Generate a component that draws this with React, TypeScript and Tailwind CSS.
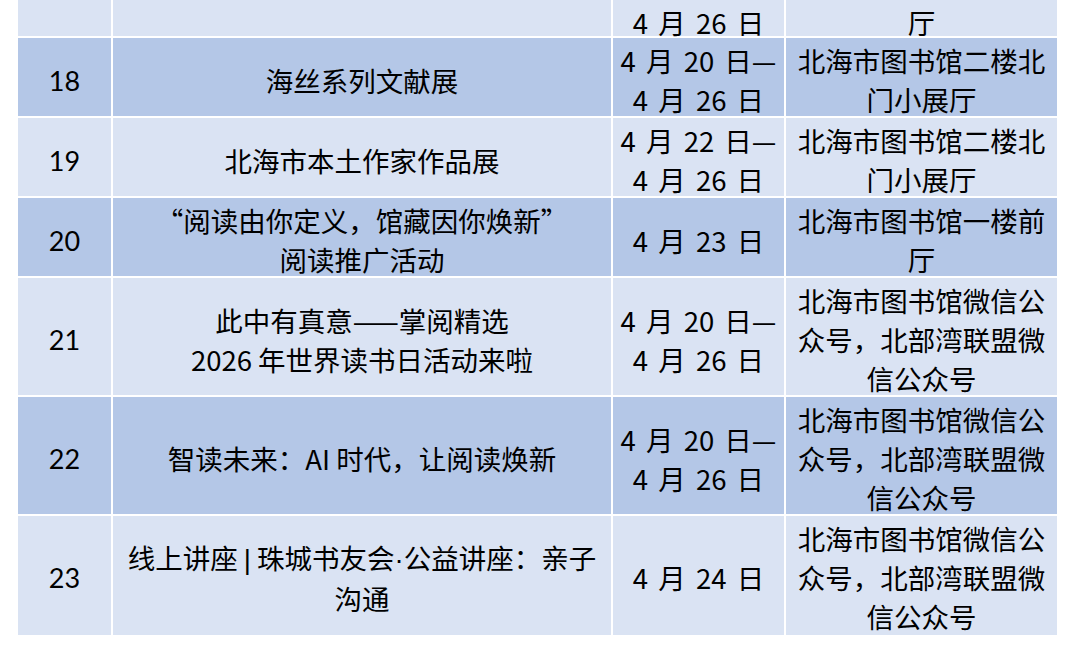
import React from 'react';

type Row = {
  no: string;
  title: React.ReactNode[];
  date: string[];
  place: string[];
  h: string;
  tone: 'light' | 'dark';
};

const Dot = () => <span className="font-['Liberation_Sans']">·</span>;
const Bar = () => <span className="font-['Liberation_Sans'] px-[6px]">|</span>;

const rows: Row[] = [
  { no: '', title: [''], date: ['4 月 26 日'], place: ['厅'], h: 'h-[38px]', tone: 'light' },
  { no: '18', title: ['海丝系列文献展'], date: ['4 月 20 日—', '4 月 26 日'], place: ['北海市图书馆二楼北', '门小展厅'], h: 'h-[80px]', tone: 'dark' },
  { no: '19', title: ['北海市本土作家作品展'], date: ['4 月 22 日—', '4 月 26 日'], place: ['北海市图书馆二楼北', '门小展厅'], h: 'h-[80px]', tone: 'light' },
  { no: '20', title: ['“阅读由你定义，馆藏因你焕新”', '阅读推广活动'], date: ['4 月 23 日'], place: ['北海市图书馆一楼前', '厅'], h: 'h-[80px]', tone: 'dark' },
  { no: '21', title: ['此中有真意——掌阅精选', '2026 年世界读书日活动来啦'], date: ['4 月 20 日—', '4 月 26 日'], place: ['北海市图书馆微信公', '众号，北部湾联盟微', '信公众号'], h: 'h-[119px]', tone: 'light' },
  { no: '22', title: ['智读未来：AI 时代，让阅读焕新'], date: ['4 月 20 日—', '4 月 26 日'], place: ['北海市图书馆微信公', '众号，北部湾联盟微', '信公众号'], h: 'h-[119px]', tone: 'dark' },
  {
    no: '23',
    title: [
      <>线上讲座<Bar />珠城书友会<Dot />公益讲座：亲子</>,
      '沟通',
    ],
    date: ['4 月 24 日'],
    place: ['北海市图书馆微信公', '众号，北部湾联盟微', '信公众号'],
    h: 'h-[121px]',
    tone: 'light',
  },
];

const Lines = ({ lines }: { lines: React.ReactNode[] }) => (
  <div className="pt-[3px]">
    {lines.map((l, i) => (
      <div key={i} className="whitespace-nowrap">{l}</div>
    ))}
  </div>
);

export default function App() {
  return (
    <div className="w-[1080px] h-[670px] overflow-hidden bg-white">
      <div
        className="ml-[18px] w-[1039px] text-[27.5px] leading-[39px] text-black"
        style={{ fontFamily: '"Noto Sans CJK SC", "Noto Sans", sans-serif' }}
      >
        {rows.map((r, idx) => (
          <div
            key={idx}
            className={`grid grid-cols-[95px_500px_173px_271px] border-b-2 border-white ${r.h} ${
              r.tone === 'dark' ? 'bg-[#b4c7e7]' : 'bg-[#dae3f3]'
            }`}
          >
            <div className="flex items-center justify-center border-r-2 border-white font-['Lato'] text-[27px]">
              <div className="pt-[3px]">{r.no}</div>
            </div>
            <div className="flex items-center justify-center border-r-2 border-white text-center">
              <Lines lines={r.title} />
            </div>
            <div className="flex items-center justify-center border-r-2 border-white text-center [word-spacing:4px]">
              <Lines lines={r.date} />
            </div>
            <div className="flex items-center justify-center text-center">
              <Lines lines={r.place} />
            </div>
          </div>
        ))}
      </div>
    </div>
  );
}
